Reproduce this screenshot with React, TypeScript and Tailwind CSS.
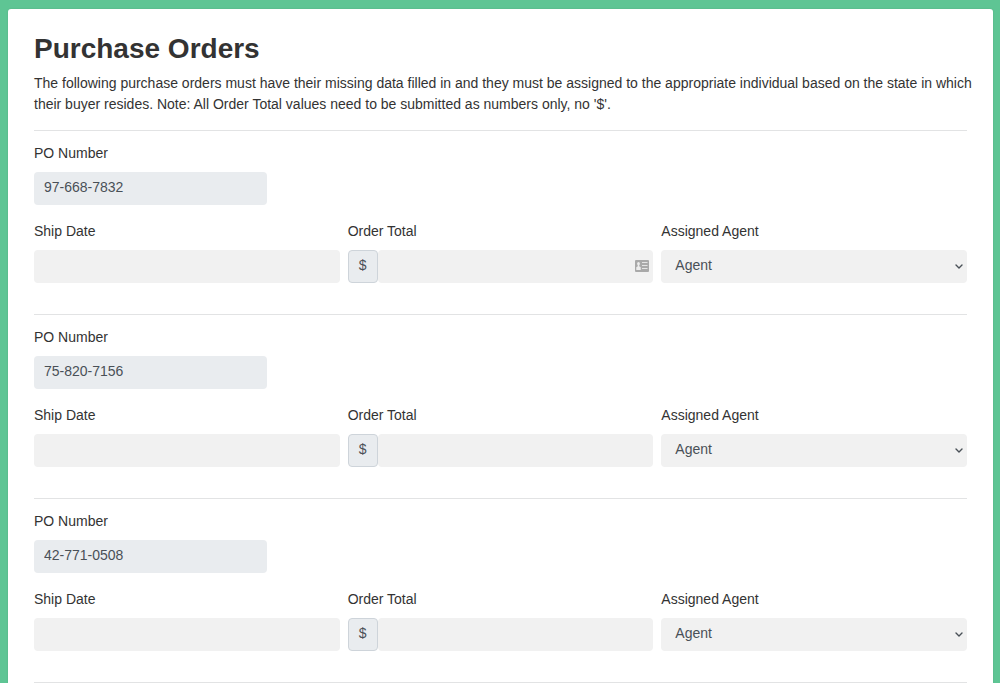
import { useId } from 'react';

type Order = { poNumber: string; showAutofill?: boolean };

const orders: Order[] = [
  { poNumber: '97-668-7832', showAutofill: true },
  { poNumber: '75-820-7156' },
  { poNumber: '42-771-0508' },
];

const labelClass = 'mb-2 block';
const fieldClass = 'block h-[33px] w-full rounded-[4px] bg-[#f1f1f1] px-[10px] text-[#495057] outline-none';

function ContactCardIcon() {
  return (
    <svg viewBox="0 0 14 12" className="h-3 w-3.5" aria-hidden="true">
      <rect width="14" height="12" rx="1" fill="#a9a9a9" />
      <ellipse cx="3.500" cy="3.800" rx="1.400" ry="1.800" fill="#ededed" />
      <path d="M2.800 5h1.400v1.200l1.500 1V10H1.300V7.200l1.500-1z" fill="#ededed" />
      <path d="M7 2.500h5.500M7 5.500h5.500M7 8.500h5.500" stroke="#e4e4e4" strokeWidth="1" />
    </svg>
  );
}

function ChevronIcon() {
  return (
    <svg viewBox="0 0 8 5" className="h-[5px] w-2" fill="none" aria-hidden="true">
      <path d="M1 1l3 3 3-3" stroke="#495057" strokeWidth="1.400" strokeLinecap="round" strokeLinejoin="round" />
    </svg>
  );
}

function OrderFields({ order }: { order: Order }) {
  const id = useId();
  return (
    <section className="border-b border-[#e2e3e4] pt-3 pb-[31px]">
      <div className="mb-4 w-1/4">
        <label htmlFor={`${id}-po`} className={labelClass}>PO Number</label>
        <input
          id={`${id}-po`}
          readOnly
          value={order.poNumber}
          className="block h-[33px] w-full rounded-[4px] bg-[#e9ecef] px-[10px] pb-[3px] text-[#495057] outline-none"
        />
      </div>
      <div className="grid grid-cols-3 gap-2">
        <div>
          <label htmlFor={`${id}-date`} className={labelClass}>Ship Date</label>
          <input id={`${id}-date`} type="text" className={fieldClass} />
        </div>
        <div>
          <label htmlFor={`${id}-total`} className={labelClass}>Order Total</label>
          <div className="flex">
            <span className="flex w-[30px] shrink-0 items-center justify-center rounded-[4px] border border-[#ced4da] bg-[#e9ecef] pb-0.5 text-[#495057]">
              $
            </span>
            <div className="relative min-w-0 flex-1">
              <input id={`${id}-total`} type="text" className={fieldClass} />
              {order.showAutofill && (
                <span className="pointer-events-none absolute inset-y-0 right-1 flex items-center pb-px">
                  <ContactCardIcon />
                </span>
              )}
            </div>
          </div>
        </div>
        <div>
          <label htmlFor={`${id}-agent`} className={labelClass}>Assigned Agent</label>
          <div className="relative">
            <select
              id={`${id}-agent`}
              className="block h-[33px] w-full appearance-none rounded-[4px] bg-[#f1f1f1] px-3.5 pb-0.5 text-[#495057] outline-none"
            >
              <option>Agent</option>
            </select>
            <span className="pointer-events-none absolute inset-y-0 right-1 flex items-center">
              <ChevronIcon />
            </span>
          </div>
        </div>
      </div>
    </section>
  );
}

export default function App() {
  return (
    <div className="flex min-h-screen bg-[#5ec594] pt-[9px] pr-[7px] pl-2 font-['Liberation_Sans',Arial,sans-serif] text-[14px] leading-[21px] text-[#333333]">
      <main className="min-w-0 flex-1 rounded-t-[3px] bg-white px-[26px] pt-[26px] shadow-[0_0_2px_rgba(0,0,0,0.12)]">
        <header className="border-b border-[#e2e3e4] pb-[15px]">
          <h1 className="mb-[10px] text-[28px] leading-[28px] font-bold">Purchase Orders</h1>
          <p className="-mr-3">
            The following purchase orders must have their missing data filled in and they must be assigned to the
            appropriate individual based on the state in which their buyer resides. Note: All Order Total values need
            to be submitted as numbers only, no '$'.
          </p>
        </header>
        <form>
          {orders.map((order) => (
            <OrderFields key={order.poNumber} order={order} />
          ))}
        </form>
      </main>
    </div>
  );
}
